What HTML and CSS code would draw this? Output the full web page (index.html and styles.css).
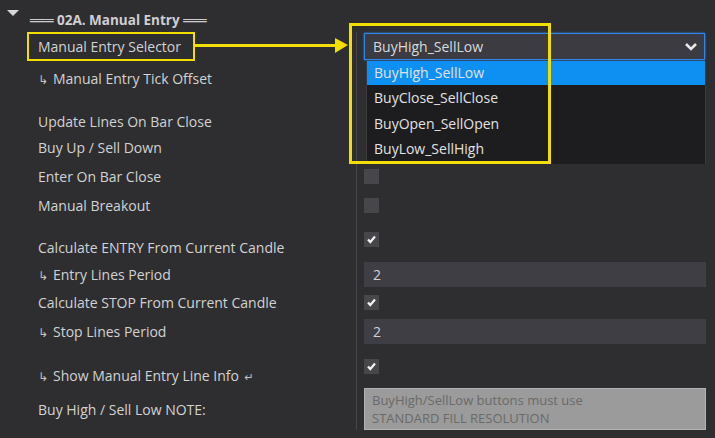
FILE: index.html
```html
<!DOCTYPE html>
<html lang="en">
<head>
  <meta charset="UTF-8">
  <title>02A. Manual Entry</title>
  <link rel="stylesheet" href="styles.css">
</head>
<body>
  <div class="page">
    <div class="header">
      <span class="toggle"></span>
      <span class="title"><span class="bars">═══</span> 02A. Manual Entry <span class="bars">═══</span></span>
    </div>

    <div class="props">
      <div class="row r-sel">
        <div class="label"><span class="mark">Manual Entry Selector</span></div>
        <div class="ctl">
          <div class="select">
            <span>BuyHigh_SellLow</span>
            <svg class="chev" width="14" height="10" viewBox="0 0 14 10"><path d="M2 2 L7 7 L12 2" fill="none" stroke="#e8e8e8" stroke-width="2.6"/></svg>
          </div>
          <ul class="menu">
            <li class="on">BuyHigh_SellLow</li>
            <li>BuyClose_SellClose</li>
            <li>BuyOpen_SellOpen</li>
            <li>BuyLow_SellHigh</li>
          </ul>
        </div>
      </div>
      <div class="row r-tick">
        <div class="label"><span class="sub">↳</span>Manual Entry Tick Offset</div>
        <div class="ctl"></div>
      </div>
      <div class="row r-upd">
        <div class="label">Update Lines On Bar Close</div>
        <div class="ctl"></div>
      </div>
      <div class="row r-buy">
        <div class="label">Buy Up / Sell Down</div>
        <div class="ctl"></div>
      </div>
      <div class="row r-enter">
        <div class="label">Enter On Bar Close</div>
        <div class="ctl"><span class="check"></span></div>
      </div>
      <div class="row r-break">
        <div class="label">Manual Breakout</div>
        <div class="ctl"><span class="check"></span></div>
      </div>
      <div class="row r-centry">
        <div class="label">Calculate ENTRY From Current Candle</div>
        <div class="ctl"><span class="check on"><svg width="15" height="15" viewBox="0 0 15 15"><path d="M4 7.5 L6.3 10 L11 4.5" fill="none" stroke="#f2f2f2" stroke-width="2.2"/></svg></span></div>
      </div>
      <div class="row r-eper">
        <div class="label"><span class="sub">↳</span>Entry Lines Period</div>
        <div class="ctl"><div class="num">2</div></div>
      </div>
      <div class="row r-cstop">
        <div class="label">Calculate STOP From Current Candle</div>
        <div class="ctl"><span class="check on"><svg width="15" height="15" viewBox="0 0 15 15"><path d="M4 7.5 L6.3 10 L11 4.5" fill="none" stroke="#f2f2f2" stroke-width="2.2"/></svg></span></div>
      </div>
      <div class="row r-sper">
        <div class="label"><span class="sub">↳</span>Stop Lines Period</div>
        <div class="ctl"><div class="num">2</div></div>
      </div>
      <div class="row r-info">
        <div class="label"><span class="sub">↳</span>Show Manual Entry Line Info <span class="ret">↵</span></div>
        <div class="ctl"><span class="check on"><svg width="15" height="15" viewBox="0 0 15 15"><path d="M4 7.5 L6.3 10 L11 4.5" fill="none" stroke="#f2f2f2" stroke-width="2.2"/></svg></span></div>
      </div>
      <div class="row r-note">
        <div class="label">Buy High / Sell Low NOTE:</div>
        <div class="ctl"><div class="note">BuyHigh/SellLow buttons must use<br>STANDARD FILL RESOLUTION</div></div>
      </div>
    </div>

    <!-- annotation: box round the list and arrow from the label -->
    <div class="callout"></div>
    <div class="arrow"></div>
  </div>
</body>
</html>
```

FILE: styles.css
```css
body {
  margin: 0;
  background-color: #2e2e31;
  font-family: "Open Sans", "Noto Sans", sans-serif;
  font-size: 14px;
  color: #d2d2d2;
}

.page {
  position: relative;
  width: 715px;
  height: 438px;
  overflow: hidden;
}

.header {
  height: 24px;
  padding-top: 8px;
  display: flex;
  align-items: center;
}

.toggle {
  width: 0;
  height: 0;
  margin: -14px 0 0 7px;
  border-left: 6px solid transparent;
  border-right: 6px solid transparent;
  border-top: 6px solid #d8d8d8;
}

.title {
  margin-left: 11px;
  font-weight: bold;
  font-size: 13.5px;
  color: #cfcfd2;
}

.bars {
  font-family: "DejaVu Sans", sans-serif;
  font-weight: normal;
  font-size: 13px;
  letter-spacing: 0;
}

.props {
  background: linear-gradient(#46464a, #46464a) 356px 0 / 1px 100% no-repeat;
}

.row {
  display: grid;
  grid-template-columns: 356px 1fr;
  align-items: center;
}

.label {
  padding-left: 38px;
  white-space: nowrap;
}

.ctl {
  position: relative;
  padding: 0 9px 0 8px;
  display: flex;
  align-items: center;
}

.sub {
  display: inline-block;
  width: 15px;
  font-family: "DejaVu Sans", sans-serif;
  font-size: 12px;
  color: #c4c4c4;
}

.ret {
  margin-left: 2px;
  font-family: "DejaVu Sans", sans-serif;
  font-size: 11px;
  color: #c4c4c4;
}

.r-sel    { height: 29px; }
.r-tick   { height: 34px; }
.r-upd    { height: 26px; margin-top: 13px; }
.r-buy    { height: 26px; }
.r-enter  { height: 30px; margin-top: 1px; }
.r-break  { height: 28px; }
.r-centry { height: 29px; margin-top: 13px; align-items: start; }
.r-eper   { height: 26px; }
.r-cstop  { height: 31px; }
.r-sper   { height: 27px; }
.r-info   { height: 36px; margin-top: 7px; align-items: start; }
.r-note   { height: 42px; }

.r-centry .label { padding-top: 6px; }
.r-info .label   { padding-top: 14px; }
.r-info .ctl     { padding-top: 7px; }

.mark {
  display: block;
  box-sizing: border-box;
  width: 168px;
  height: 29px;
  margin-left: -11px;
  padding-left: 9px;
  line-height: 25px;
  border: 2px solid #f2de00;
}

.select {
  flex: 1;
  box-sizing: border-box;
  height: 27px;
  margin-right: 1px;
  padding: 0 6px 0 8px;
  display: flex;
  align-items: center;
  justify-content: space-between;
  background-color: #3b3b41;
  border: 1px solid #2f86e8;
  box-shadow: 0 0 2px #2f86e8;
  color: #dadada;
}

.menu {
  position: absolute;
  top: 28px;
  left: 10px;
  right: 9px;
  margin: 0;
  padding: 0 0 2px;
  list-style: none;
  background-color: #1d1d1f;
  border-left: 1px solid #3a3a3e;
  border-right: 1px solid #3a3a3e;
  color: #e2e2e2;
}

.menu li {
  height: 25.5px;
  line-height: 25.5px;
  padding-left: 7px;
}

.menu li.on {
  height: 24px;
  line-height: 24px;
  background-color: #0e8ff2;
}

.check {
  width: 15px;
  height: 15px;
  background-color: #46464b;
}

.check svg { display: block; }

.num {
  flex: 1;
  height: 25px;
  line-height: 25px;
  padding-left: 9px;
  background-color: #3f3e45;
  color: #d2d2d2;
}

.note {
  flex: 1;
  box-sizing: border-box;
  height: 42px;
  padding: 2px 0 0 7px;
  line-height: 18px;
  font-size: 13px;
  background-color: #9b9b9b;
  border: 1px solid #b3b3b3;
  color: #6a6a6a;
}

.callout {
  position: absolute;
  left: 349px;
  top: 23px;
  width: 202px;
  height: 141px;
  box-sizing: border-box;
  border: 3px solid #f2de00;
}

.arrow {
  position: absolute;
  left: 195px;
  top: 44px;
  width: 141px;
  height: 3px;
  background-color: #f2de00;
}

.arrow::after {
  content: "";
  position: absolute;
  right: -12px;
  top: -6px;
  border-top: 7px solid transparent;
  border-bottom: 8px solid transparent;
  border-left: 13px solid #f2de00;
}
```
